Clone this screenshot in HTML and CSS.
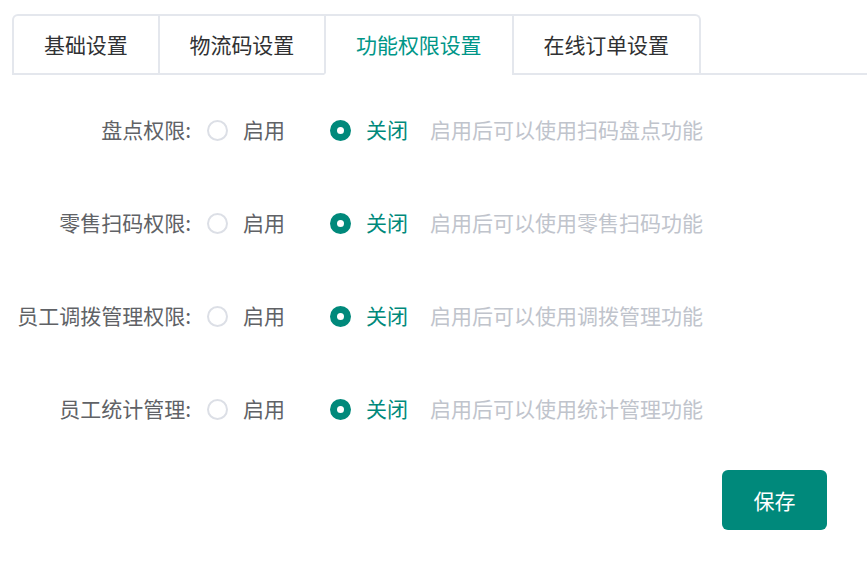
FILE: index.html
```html
<!DOCTYPE html>
<html lang="zh-CN">
<head>
<meta charset="utf-8">
<title>功能权限设置</title>
<link rel="stylesheet" href="styles.css">
</head>
<body>
<div class="page">
  <div class="tabs">
    <div class="tab-nav">
      <div class="tab">基础设置</div>
      <div class="tab">物流码设置</div>
      <div class="tab active">功能权限设置</div>
      <div class="tab">在线订单设置</div>
    </div>
    <div class="tab-fill"></div>
  </div>

  <div class="form">
    <div class="row">
      <div class="label">盘点权限:</div>
      <div class="radio"><span class="circle"></span><span class="rtext">启用</span></div>
      <div class="radio checked"><span class="circle"></span><span class="rtext">关闭</span></div>
      <div class="hint">启用后可以使用扫码盘点功能</div>
    </div>
    <div class="row">
      <div class="label">零售扫码权限:</div>
      <div class="radio"><span class="circle"></span><span class="rtext">启用</span></div>
      <div class="radio checked"><span class="circle"></span><span class="rtext">关闭</span></div>
      <div class="hint">启用后可以使用零售扫码功能</div>
    </div>
    <div class="row">
      <div class="label">员工调拨管理权限:</div>
      <div class="radio"><span class="circle"></span><span class="rtext">启用</span></div>
      <div class="radio checked"><span class="circle"></span><span class="rtext">关闭</span></div>
      <div class="hint">启用后可以使用调拨管理功能</div>
    </div>
    <div class="row">
      <div class="label">员工统计管理:</div>
      <div class="radio"><span class="circle"></span><span class="rtext">启用</span></div>
      <div class="radio checked"><span class="circle"></span><span class="rtext">关闭</span></div>
      <div class="hint">启用后可以使用统计管理功能</div>
    </div>
  </div>

  <div class="actions">
    <button class="btn-save" type="button">保存</button>
  </div>
</div>
</body>
</html>
```

FILE: styles.css
```css
html, body {
  margin: 0;
  padding: 0;
  background: #ffffff;
}

body {
  font-family: "Noto Sans CJK SC", "Microsoft YaHei", sans-serif;
  font-size: 21px;
  color: #606266;
}

.page {
  padding: 14px 0 0 12px;
}

.tabs {
  display: flex;
}

.tab-nav {
  display: flex;
  border: 2px solid #e4e7ed;
  border-bottom: none;
  border-radius: 6px 6px 0 0;
}

.tab {
  height: 57px;
  line-height: 57px;
  padding: 0 30px;
  letter-spacing: -0.1px;
  color: #303133;
  border-bottom: 2px solid #e4e7ed;
  border-left: 2px solid #e4e7ed;
  white-space: nowrap;
}

.tab:first-child {
  border-left: none;
}

.tab.active {
  color: #009688;
  border-bottom-color: #ffffff;
}

.tab-fill {
  flex: 1;
  border-bottom: 2px solid #e4e7ed;
}

.form {
  display: flex;
  flex-direction: column;
  gap: 33px;
  margin-top: 25px;
}

.row {
  display: flex;
  align-items: center;
  height: 60px;
}

.label,
.rtext,
.hint {
  padding-bottom: 3px;
}

.label {
  width: 179px;
  text-align: right;
  color: #606266;
  white-space: nowrap;
  margin-right: 16px;
}

.radio {
  display: flex;
  align-items: center;
  margin-right: 45px;
  color: #606266;
}

.radio.checked {
  margin-right: 22px;
  color: #00897b;
}

.circle {
  position: relative;
  width: 21px;
  height: 21px;
  box-sizing: border-box;
  border: 2px solid #dcdfe6;
  border-radius: 50%;
  background: #fff;
}

.radio.checked .circle {
  background: #00897b;
  border-color: #00897b;
}

.radio.checked .circle::after {
  content: "";
  position: absolute;
  left: 50%;
  top: 50%;
  width: 7px;
  height: 7px;
  margin: -3.5px 0 0 -3.5px;
  border-radius: 50%;
  background: #fff;
}

.rtext {
  margin-left: 15px;
}

.hint {
  color: #c0c4cc;
  white-space: nowrap;
}

.actions {
  display: flex;
  justify-content: flex-end;
  padding-right: 40px;
  margin-top: 31px;
}

.btn-save {
  width: 105px;
  height: 60px;
  border: none;
  border-radius: 6px;
  background: #00897b;
  color: #ffffff;
  font-family: inherit;
  font-size: 21px;
  cursor: pointer;
}
```
